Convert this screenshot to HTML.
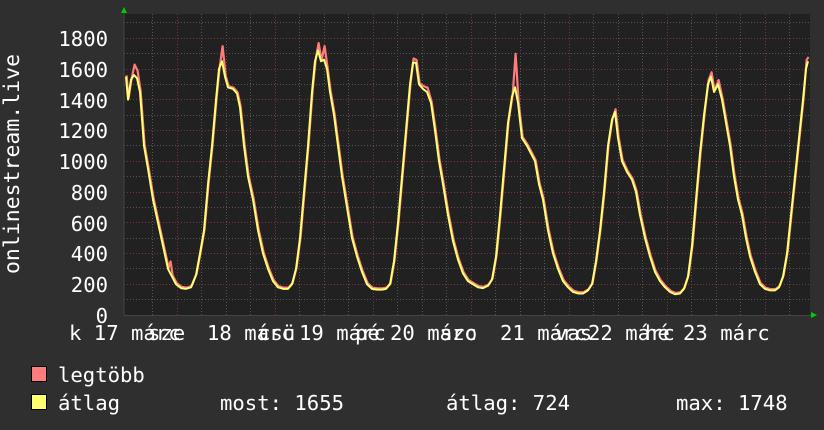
<!DOCTYPE html>
<html><head><meta charset="utf-8"><style>
html,body{margin:0;padding:0;background:#2f2f2f;}
svg{display:block}
text{font-family:"DejaVu Sans Mono","Liberation Mono",monospace;fill:#fff;font-size:20.6px}
</style></head><body>
<svg width="824" height="430" xmlns="http://www.w3.org/2000/svg">
<rect width="824" height="430" fill="#2f2f2f"/>
<rect x="124" y="14" width="686" height="301" fill="#212121"/>
<g stroke="#555" stroke-width="1" stroke-dasharray="1,2">
<line x1="124" x2="810" y1="299.5" y2="299.5"/><line x1="124" x2="810" y1="268.5" y2="268.5"/><line x1="124" x2="810" y1="238.5" y2="238.5"/><line x1="124" x2="810" y1="207.5" y2="207.5"/><line x1="124" x2="810" y1="176.5" y2="176.5"/><line x1="124" x2="810" y1="145.5" y2="145.5"/><line x1="124" x2="810" y1="115.5" y2="115.5"/><line x1="124" x2="810" y1="84.5" y2="84.5"/><line x1="124" x2="810" y1="53.5" y2="53.5"/><line x1="124" x2="810" y1="22.5" y2="22.5"/>
<line y1="14" y2="315" x1="152.5" x2="152.5"/><line y1="14" y2="315" x1="201.5" x2="201.5"/><line y1="14" y2="315" x1="226.5" x2="226.5"/><line y1="14" y2="315" x1="250.5" x2="250.5"/><line y1="14" y2="315" x1="299.5" x2="299.5"/><line y1="14" y2="315" x1="324.5" x2="324.5"/><line y1="14" y2="315" x1="348.5" x2="348.5"/><line y1="14" y2="315" x1="397.5" x2="397.5"/><line y1="14" y2="315" x1="422.5" x2="422.5"/><line y1="14" y2="315" x1="446.5" x2="446.5"/><line y1="14" y2="315" x1="495.5" x2="495.5"/><line y1="14" y2="315" x1="520.5" x2="520.5"/><line y1="14" y2="315" x1="544.5" x2="544.5"/><line y1="14" y2="315" x1="593.5" x2="593.5"/><line y1="14" y2="315" x1="618.5" x2="618.5"/><line y1="14" y2="315" x1="642.5" x2="642.5"/><line y1="14" y2="315" x1="691.5" x2="691.5"/><line y1="14" y2="315" x1="716.5" x2="716.5"/><line y1="14" y2="315" x1="740.5" x2="740.5"/><line y1="14" y2="315" x1="789.5" x2="789.5"/>
</g>
<g stroke="#7a3535" stroke-width="1" stroke-dasharray="1,2">
<line x1="124" x2="810" y1="284.5" y2="284.5"/><line x1="124" x2="810" y1="253.5" y2="253.5"/><line x1="124" x2="810" y1="222.5" y2="222.5"/><line x1="124" x2="810" y1="192.5" y2="192.5"/><line x1="124" x2="810" y1="161.5" y2="161.5"/><line x1="124" x2="810" y1="130.5" y2="130.5"/><line x1="124" x2="810" y1="99.5" y2="99.5"/><line x1="124" x2="810" y1="69.5" y2="69.5"/><line x1="124" x2="810" y1="38.5" y2="38.5"/>
<line y1="14" y2="315" x1="177.5" x2="177.5"/><line y1="14" y2="315" x1="275.5" x2="275.5"/><line y1="14" y2="315" x1="373.5" x2="373.5"/><line y1="14" y2="315" x1="471.5" x2="471.5"/><line y1="14" y2="315" x1="569.5" x2="569.5"/><line y1="14" y2="315" x1="667.5" x2="667.5"/><line y1="14" y2="315" x1="765.5" x2="765.5"/>
</g>
<line x1="124" y1="10" x2="124" y2="315" stroke="#444"/>
<line x1="124" y1="315.5" x2="812" y2="315.5" stroke="#444"/>
<polygon points="121,13 127,13 124,7" fill="#0c0"/>
<polygon points="811,312 811,318 817,315" fill="#0c0"/>
<g transform="translate(0,315) scale(1,-0.1538)" fill="none" stroke-linejoin="round">
<polyline vector-effect="non-scaling-stroke" stroke="#ff7c7c" stroke-width="2.2" transform="translate(0.6,8)" points="126,1550 128,1400 131,1530 134,1620 137,1580 140,1450 144,1100 148,950 153,750 158,600 163,450 168,300 170,340 172,250 176,200 181,175 186,170 191,180 196,260 200,400 204,550 208,850 212,1100 216,1400 219,1600 222,1740 225,1550 228,1480 233,1470 237,1440 240,1350 244,1100 248,900 253,750 258,550 263,400 268,300 273,220 278,180 283,170 288,170 292,200 296,300 300,500 304,800 308,1100 312,1450 315,1650 318,1760 321,1650 324,1740 327,1600 330,1450 334,1300 338,1100 342,900 347,700 352,500 357,380 362,280 367,200 372,170 377,165 382,165 386,170 390,200 394,350 398,600 402,900 406,1200 410,1500 413,1660 416,1650 419,1500 423,1480 427,1470 431,1380 435,1200 439,1000 443,850 448,650 453,480 458,360 463,270 468,220 473,200 478,180 483,175 488,190 492,230 496,380 500,650 504,950 508,1250 512,1420 515,1690 518,1380 522,1150 527,1100 531,1050 535,1000 539,850 543,750 548,550 553,400 558,300 563,220 568,180 573,150 578,140 583,140 588,160 592,200 596,350 600,550 604,800 608,1100 612,1270 615,1330 618,1150 622,1000 627,930 632,880 636,800 640,650 645,500 650,380 655,280 660,220 665,180 670,150 675,135 680,140 684,170 688,250 692,450 696,750 700,1050 704,1300 708,1520 711,1570 714,1450 718,1520 722,1400 726,1250 730,1100 734,900 738,750 742,650 746,500 750,380 755,280 760,200 765,170 770,160 775,160 779,180 783,250 787,400 791,650 795,900 799,1150 803,1400 806,1650 808,1670"/>
<polyline vector-effect="non-scaling-stroke" stroke="#ffff70" stroke-width="2" points="126,1550 128,1400 131,1530 134,1560 137,1540 140,1450 144,1100 148,950 153,750 158,600 163,450 168,300 172,250 176,200 181,175 186,170 191,180 196,260 200,400 204,550 208,850 212,1100 216,1400 219,1600 222,1650 225,1550 228,1480 233,1470 237,1440 240,1350 244,1100 248,900 253,750 258,550 263,400 268,300 273,220 278,180 283,170 288,170 292,200 296,300 300,500 304,800 308,1100 312,1450 315,1650 318,1720 321,1650 324,1660 327,1600 330,1450 334,1300 338,1100 342,900 347,700 352,500 357,380 362,280 367,200 372,170 377,165 382,165 386,170 390,200 394,350 398,600 402,900 406,1200 410,1500 413,1640 416,1640 419,1500 423,1470 427,1450 431,1380 435,1200 439,1000 443,850 448,650 453,480 458,360 463,270 468,220 473,200 478,180 483,175 488,190 492,230 496,380 500,650 504,950 508,1250 512,1420 515,1480 518,1380 522,1150 527,1100 531,1050 535,1000 539,850 543,750 548,550 553,400 558,300 563,220 568,180 573,150 578,140 583,140 588,160 592,200 596,350 600,550 604,800 608,1100 612,1270 615,1320 618,1150 622,1000 627,930 632,880 636,800 640,650 645,500 650,380 655,280 660,220 665,180 670,150 675,135 680,140 684,170 688,250 692,450 696,750 700,1050 704,1300 708,1500 711,1550 714,1450 718,1500 722,1400 726,1250 730,1100 734,900 738,750 742,650 746,500 750,380 755,280 760,200 765,170 770,160 775,160 779,180 783,250 787,400 791,650 795,900 799,1150 803,1400 806,1600 808,1650"/>
</g>
<g text-anchor="end">
<text x="108" y="46">1800</text><text x="108" y="77">1600</text><text x="108" y="108">1400</text><text x="108" y="138">1200</text><text x="108" y="169">1000</text><text x="108" y="200">800</text><text x="108" y="231">600</text><text x="108" y="261">400</text><text x="108" y="292">200</text><text x="108" y="323">0</text>
</g>
<text transform="translate(19,164) rotate(-90)" text-anchor="middle" style="font-size:21.5px">onlinestream.live</text>
<g>
<text x="69" y="340">k 17 márc</text><text x="148" y="340">sze</text>
<text x="207" y="340">18 márc</text><text x="258" y="340">csü</text>
<text x="299" y="340">19 márc</text><text x="355" y="340">pé</text>
<text x="390" y="340">20 márc</text><text x="440" y="340">szo</text>
<text x="500" y="340">21 márc</text><text x="555" y="340">vas</text>
<text x="588" y="340">22 márc</text><text x="645" y="340">hé</text>
<text x="683" y="340">23 márc</text>
</g>
<rect x="31.5" y="366.5" width="15" height="15" fill="#ff7c7c" stroke="#000"/>
<rect x="31.5" y="394.5" width="15" height="15" fill="#ffff70" stroke="#000"/>
<text x="58" y="382">legtöbb</text>
<text x="58" y="410">átlag</text>
<text x="220" y="410">most: 1655</text>
<text x="446" y="410">átlag: 724</text>
<text x="676" y="410">max: 1748</text>
</svg>
</body></html>
